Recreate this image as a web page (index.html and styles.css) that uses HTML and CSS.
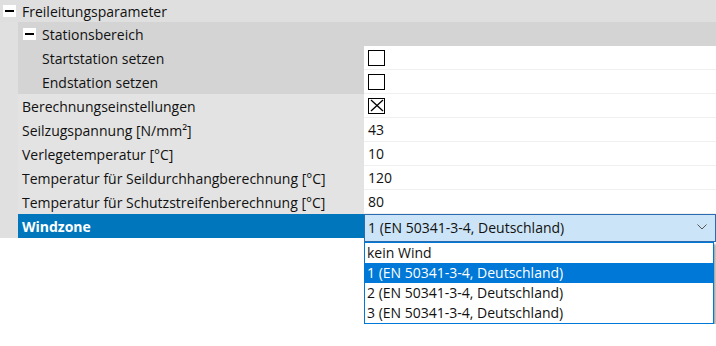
FILE: index.html
```html
<!DOCTYPE html>
<html lang="de">
<head>
    <meta charset="UTF-8">
    <title>Freileitungsparameter</title>
    <link rel="stylesheet" href="styles.css">
</head>
<body>
    <div class="grid">
        <div class="row group top">
            <span class="toggle"></span>
            <span class="text">Freileitungsparameter</span>
        </div>
        <div class="row">
            <div class="gutter"></div>
            <div class="subgroup">
                <span class="toggle"></span>
                <span class="text">Stationsbereich</span>
            </div>
        </div>
        <div class="row">
            <div class="gutter"></div>
            <div class="label nested">Startstation setzen</div>
            <div class="value"><span class="check"></span></div>
        </div>
        <div class="row">
            <div class="gutter"></div>
            <div class="label nested">Endstation setzen</div>
            <div class="value"><span class="check"></span></div>
        </div>
        <div class="row">
            <div class="gutter"></div>
            <div class="label">Berechnungseinstellungen</div>
            <div class="value">
                <span class="check">
                    <svg width="14" height="13" viewBox="0 0 14 13"><path d="M1 1 L13 12 M13 1 L1 12" stroke="#000" stroke-width="1.3" fill="none"/></svg>
                </span>
            </div>
        </div>
        <div class="row">
            <div class="gutter"></div>
            <div class="label">Seilzugspannung [N/mm²]</div>
            <div class="value">43</div>
        </div>
        <div class="row">
            <div class="gutter"></div>
            <div class="label">Verlegetemperatur [°C]</div>
            <div class="value">10</div>
        </div>
        <div class="row">
            <div class="gutter"></div>
            <div class="label">Temperatur für Seildurchhangberechnung [°C]</div>
            <div class="value">120</div>
        </div>
        <div class="row">
            <div class="gutter"></div>
            <div class="label">Temperatur für Schutzstreifenberechnung [°C]</div>
            <div class="value">80</div>
        </div>
        <div class="row last">
            <div class="gutter"></div>
            <div class="label selected">Windzone</div>
            <div class="value combo">
                <span>1 (EN 50341-3-4, Deutschland)</span>
                <svg class="chevron" width="10" height="6" viewBox="0 0 10 6"><path d="M0.5 0.5 L5 5 L9.5 0.5" stroke="#555" stroke-width="1" fill="none"/></svg>
            </div>
        </div>
    </div>

    <div class="popup-row">
        <div class="dropdown">
            <div class="option">kein Wind</div>
            <div class="option active">1 (EN 50341-3-4, Deutschland)</div>
            <div class="option">2 (EN 50341-3-4, Deutschland)</div>
            <div class="option">3 (EN 50341-3-4, Deutschland)</div>
        </div>
    </div>
</body>
</html>
```

FILE: styles.css
```css
body {
    margin: 0;
    background: white;
    font-family: "Open Sans", "Noto Sans", sans-serif;
    font-size: 14px;
    color: #111;
}
.grid {
    width: 716px;
}
.row {
    display: flex;
    height: 24px;
}
.row.top {
    height: 22px;
}
.row.last {
    align-items: flex-start;
}
.group {
    background: #dfdfdf;
    align-items: center;
}
.group .toggle {
    margin-left: 3px;
    margin-right: 6px;
}
.gutter {
    width: 18px;
    height: 24px;
    background: #e0e0e0;
    flex-shrink: 0;
}
.subgroup {
    flex: 1;
    background: #d4d4d4;
    display: flex;
    align-items: center;
}
.subgroup .toggle {
    margin-left: 5px;
    margin-right: 6px;
}
.toggle {
    width: 13px;
    height: 12px;
    background: white;
    position: relative;
    flex-shrink: 0;
}
.toggle::after {
    content: "";
    position: absolute;
    left: 2px;
    right: 2px;
    top: 5px;
    height: 2px;
    background: #000;
}
.label {
    width: 342px;
    height: 24px;
    padding-left: 4px;
    background: #e3e3e3;
    display: flex;
    align-items: center;
    white-space: nowrap;
}
.label.nested {
    background: #d4d4d4;
    padding-left: 24px;
    width: 322px;
}
.label.selected {
    background: #0077bd;
    color: white;
    font-weight: bold;
}
.value {
    flex: 1;
    height: 23px;
    background: white;
    border-bottom: 1px solid #f0f0f0;
    display: flex;
    align-items: center;
    padding-left: 4px;
}
.check {
    width: 15px;
    height: 14px;
    border: 1.5px solid #000;
    display: flex;
    align-items: center;
    justify-content: center;
}
.combo {
    background: #cce4f7;
    border: 1px solid #2c6bb0;
    height: 26px;
    padding-left: 3px;
    padding-right: 6px;
    padding-bottom: 2px;
    justify-content: space-between;
    box-sizing: border-box;
    height: 28px;
}
.chevron {
    margin-right: 2px;
}
.popup-row {
    display: flex;
    padding-left: 364px;
    padding-top: 4px;
}
.dropdown {
    width: 348px;
    border: 1px solid #0078d7;
    background: white;
    box-shadow: 2px 2px 2px rgba(0, 0, 0, 0.35);
}
.option {
    height: 20px;
    line-height: 20px;
    padding-left: 2px;
}
.option.active {
    background: #0078d7;
    color: white;
}
```
